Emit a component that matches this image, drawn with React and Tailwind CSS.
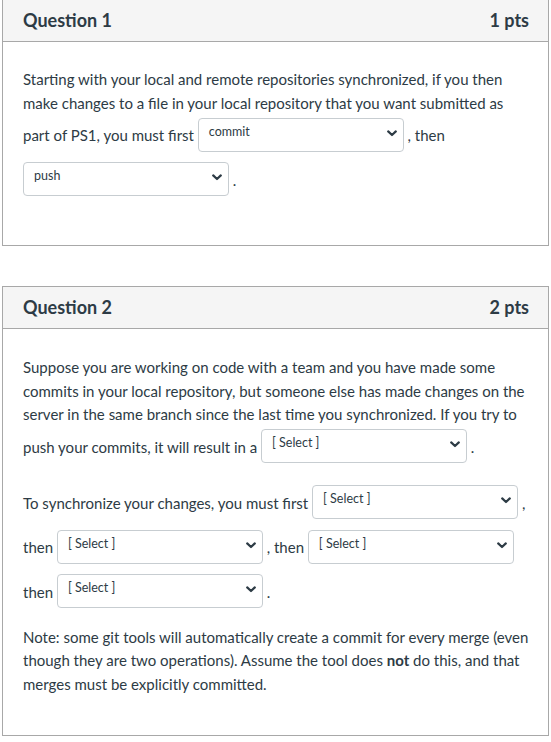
import React from 'react';

const Chevron = () => (
  <svg width="10" height="7" viewBox="0 0 10 7" className="absolute right-[6px] top-[11px]">
    <path d="M1.2 1.4 L5 5 L8.8 1.4" fill="none" stroke="#2d3b45" strokeWidth="2.2" strokeLinecap="round" strokeLinejoin="round" />
  </svg>
);

const Select = ({ value = '[ Select ]' }) => (
  <span className="relative inline-block align-middle w-[206px] h-[34px] mt-[2.5px] mb-[8px] border border-[#c7cdd1] rounded-[4px] bg-white text-[12.5px] leading-none text-[#2d3b45]">
    <span className="absolute left-[10px] top-[7px]">{value}</span>
    <Chevron />
  </span>
);

const QuestionBox = ({ title, points, children, bodyClass }) => (
  <div className="border border-[#a8a8a8] bg-white">
    <div className="h-[42px] bg-[#f5f5f5] border-b border-[#a8a8a8] flex items-center justify-between pl-[20px] pr-[19px] text-[18px] font-bold text-[#2d3b45]">
      <span>{title}</span>
      <span>{points}</span>
    </div>
    <div className={bodyClass}>{children}</div>
  </div>
);

export default function App() {
  return (
    <div
      className="bg-white min-h-[742px] px-[2px] -mt-px text-[#2d3b45]"
      style={{ fontFamily: 'Lato, "Noto Sans", "Liberation Sans", sans-serif' }}
    >
      <QuestionBox title="Question 1" points="1 pts" bodyClass="h-[203px] px-[20px] pt-[25px] text-[15px] leading-[24px]">
        <p>
          Starting with your local and remote repositories synchronized, if you then make changes to a file in your local
          repository that you want submitted as part of PS1, you must first <Select value="commit" /> , then{' '}
          <Select value="push" /> .
        </p>
      </QuestionBox>

      <div className="h-[40px]" />

      <QuestionBox title="Question 2" points="2 pts" bodyClass="h-[406px] px-[20px] pt-[27px] text-[15px] leading-[23.5px]">
        <p>
          Suppose you are working on code with a team and you have made some commits in your local repository, but
          someone else has made changes on the server in the same branch since the last time you synchronized. If you
          try to push your commits, it will result in a <Select /> .
        </p>
        <p className="mt-[11.5px]">
          To synchronize your changes, you must first <Select /> , then <Select /> , then <Select /> then{' '}
          <Select /> .
        </p>
        <p className="mt-[9.5px] mr-[-12px]">
          Note: some git tools will automatically create a commit for every merge (even though they are two
          operations). Assume the tool does <b className="font-bold">not</b> do this, and that merges must be
          explicitly committed.
        </p>
      </QuestionBox>
    </div>
  );
}
